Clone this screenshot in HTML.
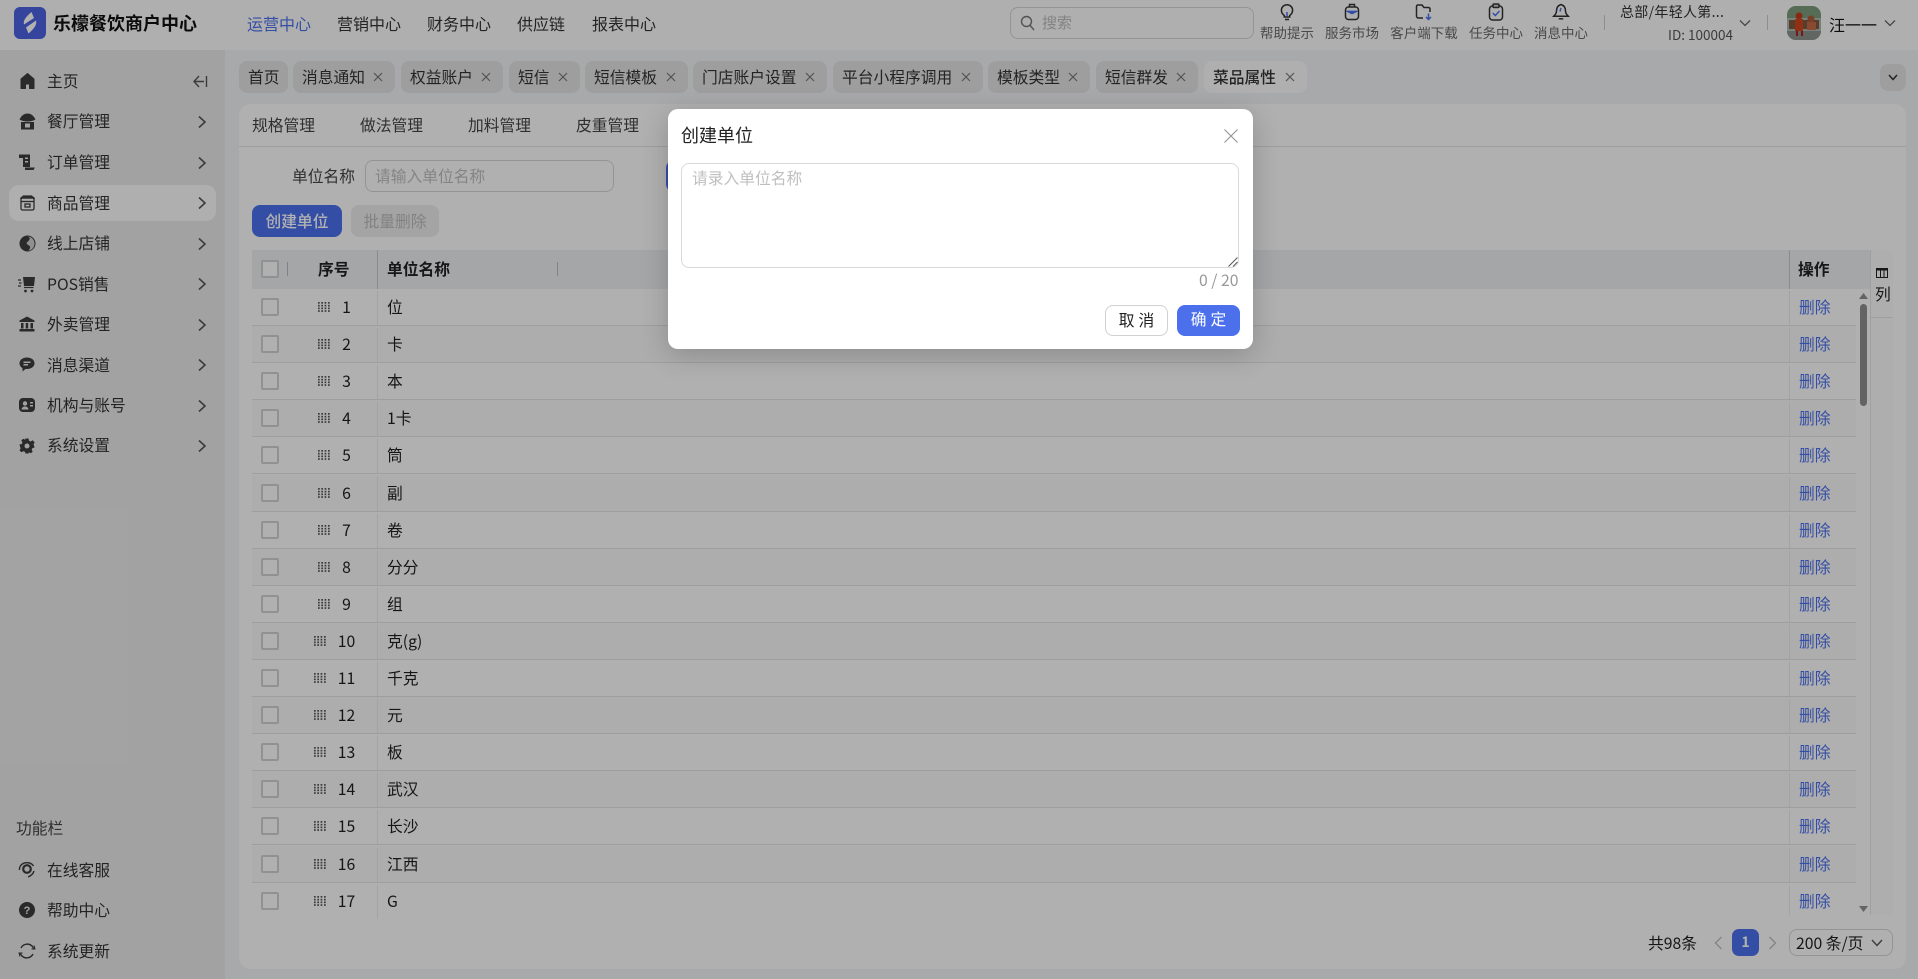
<!DOCTYPE html>
<html lang="zh"><head><meta charset="utf-8"><title>菜品属性</title>
<style>
*{box-sizing:border-box;margin:0;padding:0}
html,body{width:1918px;height:979px;overflow:hidden;background:#f1f3f5}
body{font-family:"Noto Sans CJK SC","Liberation Sans",sans-serif;font-size:15.750px;color:#1f1f1f;position:relative}
.a{position:absolute;white-space:nowrap}
.c{line-height:24px;margin-top:-12px}
#hd{left:0;top:0;width:1918px;height:50px;background:#fbfbfb}
#sb{left:0;top:50px;width:225px;height:929px;background:#e9e9e9}
.nav{color:#333;font-size:16px}
.mi{color:#333;left:47px}
.ch{left:197px;width:10px;height:14px}
.hi{font-size:13.500px;color:#6a6a6a;top:20px;line-height:24px;transform:translateX(-50%)}
.ico{position:absolute}
.tab{position:absolute;top:61px;height:32px;background:#e3e3e3;border-radius:8px;line-height:31px;padding-left:9px;color:#333}
.tab svg{position:absolute;right:12px;top:11px}
#card{left:239px;top:104px;width:1667px;height:865px;background:#fdfdfd;border-radius:12px}
.st{top:113px;line-height:24px;color:#444}
.th{background:#eceef1;position:absolute;left:252px;top:250px;width:1618px;height:39px}
.b{font-weight:700;color:#222}
.r{position:absolute;left:252px;width:1604px;height:37.1px;border-bottom:1px solid #e3e3e3}
.r.e{background:#f8f8f8}
.r .cb{position:absolute;left:9px;top:9px;width:18px;height:18px;border:2px solid #d0d0d0;border-radius:2px;background:#fdfdfd}
.r .dt{position:absolute;top:13px;width:12px;height:10px}
.r .n{position:absolute;left:74.500px;width:40px;text-align:center;line-height:35px}
.r .t{position:absolute;left:135px;line-height:35px}
.r .l1{position:absolute;left:125px;top:2px;height:34px;width:1px;background:#eaeaea}
.r .l2{position:absolute;left:1537px;top:2px;height:34px;width:1px;background:#eaeaea}
.r .op{position:absolute;left:1547px;line-height:35px;color:#4c70ec}
.ov{left:0;top:0;width:1918px;height:979px;background:rgba(0,0,0,.3)}
#m{left:668px;top:109px;width:585px;height:240px;background:#fff;border-radius:10px;box-shadow:0 6px 28px rgba(0,0,0,.2)}
</style></head><body>

<svg width="0" height="0" style="position:absolute"><defs>
<symbol id="dots" viewBox="0 0 12 10"><g fill="#555"><rect x="0" y="0" width="1.700" height="1.700"/><rect x="3.300" y="0" width="1.700" height="1.700"/><rect x="6.600" y="0" width="1.700" height="1.700"/><rect x="10" y="0" width="1.700" height="1.700"/><rect x="0" y="2.800" width="1.700" height="1.700"/><rect x="3.300" y="2.800" width="1.700" height="1.700"/><rect x="6.600" y="2.800" width="1.700" height="1.700"/><rect x="10" y="2.800" width="1.700" height="1.700"/><rect x="0" y="5.500" width="1.700" height="1.700"/><rect x="3.300" y="5.500" width="1.700" height="1.700"/><rect x="6.600" y="5.500" width="1.700" height="1.700"/><rect x="10" y="5.500" width="1.700" height="1.700"/><rect x="0" y="8.200" width="1.700" height="1.700"/><rect x="3.300" y="8.200" width="1.700" height="1.700"/><rect x="6.600" y="8.200" width="1.700" height="1.700"/><rect x="10" y="8.200" width="1.700" height="1.700"/></g></symbol>
<symbol id="chev" viewBox="0 0 10 14"><path d="M2 1.500 8 7 2 12.500" fill="none" stroke="#555" stroke-width="1.600"/></symbol>
<symbol id="x" viewBox="0 0 10 10"><path d="M1 1 9 9M9 1 1 9" stroke="#777" stroke-width="1.200" fill="none"/></symbol>
</defs></svg>

<div class="a" id="hd"></div>
<div class="a" id="sb"></div>

<!-- logo -->
<svg class="a" style="left:14px;top:7px" width="32" height="32" viewBox="0 0 32 32"><rect width="32" height="32" rx="6" fill="#4c62e0"/><path d="M17.500 5 20 11 10 17.500C9 14 11 10.500 17.500 5Z" fill="#fff"/><path d="M22 13.500C23 17 21 21 14.500 26.500L12 20.500Z" fill="#fff"/></svg>
<div class="a c" style="left:53px;top:23px;font-size:18px;font-weight:700;color:#111">乐檬餐饮商户中心</div>
<div class="a c" style="left:247px;top:23px;color:#4c70ec;font-size:16px">运营中心</div>
<div class="a c nav" style="left:337px;top:23px">营销中心</div>
<div class="a c nav" style="left:427px;top:23px">财务中心</div>
<div class="a c nav" style="left:517px;top:23px">供应链</div>
<div class="a c nav" style="left:592px;top:23px">报表中心</div>

<div class="a" style="left:1010px;top:7px;width:244px;height:32px;border:1px solid #d4d4d4;border-radius:8px"></div>
<svg class="a" style="left:1020px;top:15px" width="15" height="16" viewBox="0 0 15 16"><circle cx="6.500" cy="6.500" r="5" fill="none" stroke="#777" stroke-width="1.400"/><path d="M10.200 10.500 14 15" stroke="#777" stroke-width="1.400"/></svg>
<div class="a c" style="left:1042px;top:23px;font-size:15px;color:#bbb">搜索</div>

<!-- top icons -->
<svg class="a" style="left:1279px;top:3px" width="16" height="18" viewBox="0 0 16 18" fill="none" stroke="#333" stroke-width="1.500"><path d="M5.300 12.500C3.500 11.200 2.400 9.500 2.400 7.300A5.600 5.600 0 0 1 13.600 7.300C13.600 9.500 12.500 11.200 10.700 12.500V14H5.300Z"/><path d="M6 16.500H10" stroke="#333"/><path d="M8 9V13" stroke="#4c70ec"/></svg>
<svg class="a" style="left:1344px;top:3px" width="16" height="18" viewBox="0 0 16 18" fill="none" stroke="#333" stroke-width="1.500"><rect x="1.500" y="4" width="13" height="12.500" rx="3"/><path d="M5.500 4V1.500H10.500V4"/><path d="M2 8H14L8 11Z" fill="#4c70ec" stroke="#4c70ec" stroke-width=".8"/></svg>
<svg class="a" style="left:1415px;top:3px" width="18" height="18" viewBox="0 0 18 18" fill="none" stroke="#333" stroke-width="1.500"><path d="M8 15H3.500A2 2 0 0 1 1.500 13V3.500A1.500 1.500 0 0 1 3 2H7L9 4.500H13.500A1.500 1.500 0 0 1 15 6V9"/><path d="M13.500 10.500V16M11 14 13.500 16.500 16 14" stroke="#4c70ec"/></svg>
<svg class="a" style="left:1488px;top:3px" width="16" height="18" viewBox="0 0 16 18" fill="none" stroke="#333" stroke-width="1.500"><rect x="1.500" y="3" width="13" height="14" rx="3"/><rect x="5" y="1" width="6" height="3.500" rx="1" fill="#c8c8c8"/><path d="M4.800 10 7.300 12.500 11.500 8" stroke="#4c70ec"/></svg>
<svg class="a" style="left:1552px;top:3px" width="18" height="18" viewBox="0 0 18 18" fill="none" stroke="#333" stroke-width="1.500"><path d="M9 1.500C5.800 2.500 4.500 5 4.500 8C4.500 10.500 3 12 1.800 13.200H16.200C15 12 13.500 10.500 13.500 8C13.500 5 12.200 2.500 9 1.500Z"/><path d="M6.800 15.800H11.200"/><path d="M9 5 8 8.500" stroke="#4c70ec"/></svg>
<div class="a hi" style="left:1287px">帮助提示</div>
<div class="a hi" style="left:1352px">服务市场</div>
<div class="a hi" style="left:1424px">客户端下载</div>
<div class="a hi" style="left:1496px">任务中心</div>
<div class="a hi" style="left:1561px">消息中心</div>
<div class="a" style="left:1604px;top:15px;width:1px;height:15px;background:#ccc"></div>
<div class="a c" style="left:1620px;top:12px;font-size:14px;color:#333;letter-spacing:.3px">总部/年轻人第...</div>
<div class="a c" style="right:185px;top:34px;font-size:13.500px;color:#555">ID: 100004</div>
<svg class="a" style="left:1739px;top:19px" width="12" height="8" viewBox="0 0 12 8"><path d="M1 1.500 6 6.500 11 1.500" fill="none" stroke="#666" stroke-width="1.300"/></svg>
<div class="a" style="left:1767px;top:15px;width:1px;height:15px;background:#ccc"></div>
<svg class="a" style="left:1787px;top:6px" width="34" height="34" viewBox="0 0 34 34"><defs><clipPath id="av"><rect width="34" height="34" rx="9"/></clipPath></defs><g clip-path="url(#av)"><rect width="34" height="34" fill="#a9b9b0"/><rect width="34" height="12" fill="#7d9b7a"/><rect y="25" width="34" height="9" fill="#8d938e"/><rect x="2" y="14" width="30" height="9" fill="#7a5a40"/><circle cx="12" cy="10" r="3.500" fill="#c43a1c"/><rect x="8" y="13" width="8" height="12" fill="#d2461e"/><rect x="9" y="25" width="2" height="5" fill="#a22"/><rect x="14" y="25" width="2" height="5" fill="#a22"/><circle cx="24" cy="13" r="3.500" fill="#b05a38"/><rect x="20" y="16" width="9" height="8" fill="#c66a48"/></g></svg>
<div class="a c" style="left:1829px;top:24px;color:#111;font-size:16px">汪一一</div>
<svg class="a" style="left:1884px;top:19px" width="12" height="8" viewBox="0 0 12 8"><path d="M1 1.500 6 6.500 11 1.500" fill="none" stroke="#666" stroke-width="1.300"/></svg>

<!-- sidebar -->
<div class="a" style="left:9px;top:185px;width:207px;height:36px;background:#fbfbfb;border-radius:10px"></div>
<svg class="a" style="left:20px;top:73px" width="15" height="16" viewBox="0 0 15 16"><path d="M7.500 .5 14 6V15.500H9.500V11H5.500V15.500H1V6Z" fill="#3d3d3d" stroke="#3d3d3d" stroke-linejoin="round"/></svg>
<svg class="a" style="left:19px;top:113px" width="17" height="17" viewBox="0 0 17 17"><path d="M8.500 .5C12 .5 14.500 2.500 16.500 6.500Q13 8.500 8.500 8.500T.5 6.500C2.500 2.500 5 .5 8.500 .5Z" fill="#3d3d3d"/><path d="M2 9V16.500H15V9Z" fill="#3d3d3d"/><rect x="6" y="10.500" width="5" height="4" fill="#e9e9e9"/></svg>
<svg class="a" style="left:18px;top:153px" width="18" height="18" viewBox="0 0 18 18"><path d="M1 1.500H12V14H5V5H1Z" fill="#3d3d3d"/><rect x="7" y="4.500" width="3" height="1.500" fill="#e9e9e9"/><rect x="7" y="8" width="3" height="1.500" fill="#e9e9e9"/><path d="M7 14.500H17L15.500 17H7Z" fill="#3d3d3d"/></svg>
<svg class="a" style="left:20px;top:195px" width="15" height="16" viewBox="0 0 15 16" fill="none" stroke="#3d3d3d" stroke-width="1.300"><rect x="1" y="3" width="13" height="12" rx="1.500"/><path d="M3.500 1H11.500L14 3H1Z" fill="#3d3d3d"/><path d="M1 6.500H14"/><rect x="5" y="9" width="5" height="3"/></svg>
<svg class="a" style="left:19px;top:235px" width="17" height="17" viewBox="0 0 17 17"><circle cx="8.500" cy="8.500" r="8" fill="#3d3d3d"/><path d="M9 1.500C12 3 10.500 5 9 6.500 6.500 8 8 9.500 10 10.500 12 11.500 11 14 9.500 15.500 13 15.500 15.500 12 15.500 8.500 15.500 5 13 2 9 1.500Z" fill="#cfcfcf"/></svg>
<svg class="a" style="left:18px;top:276px" width="18" height="17" viewBox="0 0 18 17"><path d="M5 1H17L16 10H6Z" fill="#3d3d3d"/><path d="M6 11.500H15.500" stroke="#3d3d3d" stroke-width="1.200"/><circle cx="7.500" cy="15" r="1.400" fill="#3d3d3d"/><circle cx="14" cy="15" r="1.400" fill="#3d3d3d"/><path d="M0 4H3M1 7H3.500M0 10H3" stroke="#3d3d3d" stroke-width="1.300"/></svg>
<svg class="a" style="left:19px;top:316px" width="16" height="16" viewBox="0 0 16 16"><path d="M8 .5 15.500 4.500V6H.5V4.500Z" fill="#3d3d3d"/><rect x="2" y="7" width="2.500" height="5.500" fill="#3d3d3d"/><rect x="6.700" y="7" width="2.500" height="5.500" fill="#3d3d3d"/><rect x="11.500" y="7" width="2.500" height="5.500" fill="#3d3d3d"/><rect x=".5" y="13" width="15" height="2.500" fill="#3d3d3d"/></svg>
<svg class="a" style="left:19px;top:357px" width="16" height="15" viewBox="0 0 16 15"><path d="M8 .5C12.400 .5 15.500 3 15.500 6.300 15.500 9.600 12.400 12 8 12H6.500L3.500 14.500V11.200C1.500 10 .5 8.300 .5 6.300 .5 3 3.600 .5 8 .5Z" fill="#3d3d3d"/><rect x="4.500" y="4.500" width="7" height="1.500" fill="#e9e9e9"/><rect x="4.500" y="7" width="4.500" height="1.500" fill="#e9e9e9"/></svg>
<svg class="a" style="left:19px;top:398px" width="16" height="14" viewBox="0 0 16 14"><rect width="16" height="14" rx="4" fill="#3d3d3d"/><circle cx="6" cy="5.500" r="2.200" fill="#e9e9e9"/><path d="M2.500 11.500C3 9 4.500 8.500 6 8.500S9 9 9.500 11.500Z" fill="#e9e9e9"/><rect x="11" y="4" width="3" height="1.500" fill="#e9e9e9"/><rect x="11" y="7" width="3" height="1.500" fill="#e9e9e9"/></svg>
<svg class="a" style="left:19px;top:438px" width="16" height="16" viewBox="0 0 16 16"><path d="M6.500 .5H9.500L10 2.800 11.700 3.500 13.700 2.300 15.700 4.400 14.500 6.300 15.200 8 15.500 9.500 13.300 10.200 12.700 11.800 13.700 13.800 11.700 15.300 10 14.300 9.500 15.500H6.500L6 13.800 4.300 13.200 2.300 14.300 .5 12.200 1.700 10.300 1 8.800 .5 6.500 2.800 6 3.400 4.300 2.300 2.300 4.400 .7 6 1.800Z" fill="#3d3d3d"/><circle cx="8" cy="8" r="2.500" fill="#e9e9e9"/></svg>

<div class="a c mi" style="top:81px">主页</div>
<div class="a c mi" style="top:121px">餐厅管理</div>
<div class="a c mi" style="top:162px">订单管理</div>
<div class="a c mi" style="top:203px">商品管理</div>
<div class="a c mi" style="top:243px">线上店铺</div>
<div class="a c mi" style="top:284px">POS销售</div>
<div class="a c mi" style="top:324px">外卖管理</div>
<div class="a c mi" style="top:365px">消息渠道</div>
<div class="a c mi" style="top:405px">机构与账号</div>
<div class="a c mi" style="top:445px">系统设置</div>
<svg class="a" style="left:193px;top:75px" width="15" height="13" viewBox="0 0 15 13" fill="none" stroke="#555" stroke-width="1.400"><path d="M6 1 1 6.500 6 12M1.500 6.500H11M13.500 1V12"/></svg>
<svg class="a ch" style="top:115px"><use href="#chev"/></svg>
<svg class="a ch" style="top:156px"><use href="#chev"/></svg>
<svg class="a ch" style="top:196px"><use href="#chev"/></svg>
<svg class="a ch" style="top:237px"><use href="#chev"/></svg>
<svg class="a ch" style="top:277px"><use href="#chev"/></svg>
<svg class="a ch" style="top:318px"><use href="#chev"/></svg>
<svg class="a ch" style="top:358px"><use href="#chev"/></svg>
<svg class="a ch" style="top:399px"><use href="#chev"/></svg>
<svg class="a ch" style="top:439px"><use href="#chev"/></svg>

<div class="a c" style="left:16px;top:828px;color:#444">功能栏</div>
<svg class="a" style="left:18px;top:862px" width="18" height="16" viewBox="0 0 18 16" fill="none" stroke="#3d3d3d"><circle cx="9" cy="7" r="3.800" stroke-width="2.200"/><path d="M1.500 8A7.500 6.500 0 0 1 15.500 4M16 9C15 12.500 12.500 14 10 15" stroke-width="1.400"/></svg>
<svg class="a" style="left:19px;top:902px" width="16" height="16" viewBox="0 0 16 16"><circle cx="8" cy="8" r="8" fill="#3d3d3d"/><text x="8" y="12" text-anchor="middle" font-family="Liberation Sans" font-size="11" font-weight="700" fill="#e9e9e9">?</text></svg>
<svg class="a" style="left:18px;top:942px" width="18" height="18" viewBox="0 0 18 18" fill="none" stroke="#3d3d3d" stroke-width="1.400"><path d="M3 6A7 7 0 0 1 14.500 4.500L16 7"/><path d="M15 12A7 7 0 0 1 3.500 13.500L2 11"/><path d="M13.500 7H17L16 3.500M4.500 11H1L2 14.500" stroke-width="1"/></svg>
<div class="a c mi" style="top:870px">在线客服</div>
<div class="a c mi" style="top:910px">帮助中心</div>
<div class="a c mi" style="top:951px">系统更新</div>

<!-- tabs -->
<div class="tab" style="left:239px;width:49px">首页</div>
<div class="tab" style="left:293px;width:102px">消息通知<svg width="10" height="10"><use href="#x"/></svg></div>
<div class="tab" style="left:401px;width:102px">权益账户<svg width="10" height="10"><use href="#x"/></svg></div>
<div class="tab" style="left:509px;width:71px">短信<svg width="10" height="10"><use href="#x"/></svg></div>
<div class="tab" style="left:585px;width:103px">短信模板<svg width="10" height="10"><use href="#x"/></svg></div>
<div class="tab" style="left:693px;width:134px">门店账户设置<svg width="10" height="10"><use href="#x"/></svg></div>
<div class="tab" style="left:833px;width:150px">平台小程序调用<svg width="10" height="10"><use href="#x"/></svg></div>
<div class="tab" style="left:988px;width:102px">模板类型<svg width="10" height="10"><use href="#x"/></svg></div>
<div class="tab" style="left:1096px;width:102px">短信群发<svg width="10" height="10"><use href="#x"/></svg></div>
<div class="tab" style="left:1204px;width:103px;background:#fbfbfb;font-weight:500">菜品属性<svg width="10" height="10"><use href="#x"/></svg></div>
<div class="a" style="left:1880px;top:64px;width:26px;height:27px;background:#e3e3e3;border-radius:8px"></div>
<svg class="a" style="left:1888px;top:74px" width="10" height="7" viewBox="0 0 10 7"><path d="M1 1 5 5.500 9 1" fill="none" stroke="#333" stroke-width="1.500"/></svg>

<!-- card -->
<div class="a" id="card"></div>
<div class="a st" style="left:252px">规格管理</div>
<div class="a st" style="left:360px">做法管理</div>
<div class="a st" style="left:468px">加料管理</div>
<div class="a st" style="left:576px">皮重管理</div>
<div class="a" style="left:239px;top:146px;width:1667px;height:1px;background:#e3e3e3"></div>
<div class="a c" style="left:292px;top:176px;color:#444">单位名称</div>
<div class="a" style="left:365px;top:160px;width:249px;height:32px;border:1px solid #d4d4d4;border-radius:8px"></div>
<div class="a c" style="left:375px;top:175.500px;color:#bdbdbd">请输入单位名称</div>
<div class="a" style="left:666px;top:160px;width:40px;height:32px;background:#4c70ec;border-radius:8px"></div>
<div class="a" style="left:252px;top:205px;width:90px;height:32px;background:#4c70ec;border-radius:8px;color:#fff;text-align:center;line-height:31px;font-weight:500">创建单位</div>
<div class="a" style="left:351px;top:205px;width:88px;height:32px;background:#ebebeb;border-radius:8px;color:#bbb;text-align:center;line-height:31px">批量删除</div>

<!-- table -->
<div class="th"></div>
<div class="a" style="left:261px;top:260px;width:18px;height:18px;border:2px solid #d0d0d0;border-radius:2px;background:#fdfdfd"></div>
<div class="a" style="left:287px;top:262px;width:1px;height:14px;background:#bbb"></div>
<div class="a c b" style="left:318px;top:268.500px">序号</div>
<div class="a" style="left:377px;top:250px;width:1px;height:39px;background:#c8c8c8"></div>
<div class="a c b" style="left:387px;top:268.500px">单位名称</div>
<div class="a" style="left:557px;top:262px;width:1px;height:14px;background:#bbb"></div>
<div class="a" style="left:1789px;top:250px;width:1px;height:39px;background:#c8c8c8"></div>
<div class="a c b" style="left:1798px;top:268.500px">操作</div>
<div class="r" style="top:289px"><i class="cb"></i><svg class="dt" style="left:66px"><use href="#dots"/></svg><span class="n">1</span><i class="l1"></i><span class="t">位</span><i class="l2"></i><span class="op">删除</span></div>
<div class="r e" style="top:326px"><i class="cb"></i><svg class="dt" style="left:66px"><use href="#dots"/></svg><span class="n">2</span><i class="l1"></i><span class="t">卡</span><i class="l2"></i><span class="op">删除</span></div>
<div class="r" style="top:363px"><i class="cb"></i><svg class="dt" style="left:66px"><use href="#dots"/></svg><span class="n">3</span><i class="l1"></i><span class="t">本</span><i class="l2"></i><span class="op">删除</span></div>
<div class="r e" style="top:400px"><i class="cb"></i><svg class="dt" style="left:66px"><use href="#dots"/></svg><span class="n">4</span><i class="l1"></i><span class="t">1卡</span><i class="l2"></i><span class="op">删除</span></div>
<div class="r" style="top:437.400px"><i class="cb"></i><svg class="dt" style="left:66px"><use href="#dots"/></svg><span class="n">5</span><i class="l1"></i><span class="t">筒</span><i class="l2"></i><span class="op">删除</span></div>
<div class="r e" style="top:474.500px"><i class="cb"></i><svg class="dt" style="left:66px"><use href="#dots"/></svg><span class="n">6</span><i class="l1"></i><span class="t">副</span><i class="l2"></i><span class="op">删除</span></div>
<div class="r" style="top:511.600px"><i class="cb"></i><svg class="dt" style="left:66px"><use href="#dots"/></svg><span class="n">7</span><i class="l1"></i><span class="t">卷</span><i class="l2"></i><span class="op">删除</span></div>
<div class="r e" style="top:548.700px"><i class="cb"></i><svg class="dt" style="left:66px"><use href="#dots"/></svg><span class="n">8</span><i class="l1"></i><span class="t">分分</span><i class="l2"></i><span class="op">删除</span></div>
<div class="r" style="top:585.800px"><i class="cb"></i><svg class="dt" style="left:66px"><use href="#dots"/></svg><span class="n">9</span><i class="l1"></i><span class="t">组</span><i class="l2"></i><span class="op">删除</span></div>
<div class="r e" style="top:622.900px"><i class="cb"></i><svg class="dt" style="left:62px"><use href="#dots"/></svg><span class="n">10</span><i class="l1"></i><span class="t">克(g)</span><i class="l2"></i><span class="op">删除</span></div>
<div class="r" style="top:660px"><i class="cb"></i><svg class="dt" style="left:62px"><use href="#dots"/></svg><span class="n">11</span><i class="l1"></i><span class="t">千克</span><i class="l2"></i><span class="op">删除</span></div>
<div class="r e" style="top:697px"><i class="cb"></i><svg class="dt" style="left:62px"><use href="#dots"/></svg><span class="n">12</span><i class="l1"></i><span class="t">元</span><i class="l2"></i><span class="op">删除</span></div>
<div class="r" style="top:734.200px"><i class="cb"></i><svg class="dt" style="left:62px"><use href="#dots"/></svg><span class="n">13</span><i class="l1"></i><span class="t">板</span><i class="l2"></i><span class="op">删除</span></div>
<div class="r e" style="top:771.300px"><i class="cb"></i><svg class="dt" style="left:62px"><use href="#dots"/></svg><span class="n">14</span><i class="l1"></i><span class="t">武汉</span><i class="l2"></i><span class="op">删除</span></div>
<div class="r" style="top:808.400px"><i class="cb"></i><svg class="dt" style="left:62px"><use href="#dots"/></svg><span class="n">15</span><i class="l1"></i><span class="t">长沙</span><i class="l2"></i><span class="op">删除</span></div>
<div class="r e" style="top:845.500px"><i class="cb"></i><svg class="dt" style="left:62px"><use href="#dots"/></svg><span class="n">16</span><i class="l1"></i><span class="t">江西</span><i class="l2"></i><span class="op">删除</span></div>
<div class="r" style="top:882.600px;border-bottom:0"><i class="cb"></i><svg class="dt" style="left:62px"><use href="#dots"/></svg><span class="n">17</span><i class="l1"></i><span class="t">G</span><i class="l2" style="height:30px"></i><span class="op">删除</span></div>

<!-- scrollbar + column -->
<div class="a" style="left:1860px;top:304px;width:7px;height:102px;background:#8f8f8f;border-radius:4px"></div>
<svg class="a" style="left:1859px;top:293px" width="9" height="6"><path d="M4.500 0 9 6H0Z" fill="#8f8f8f"/></svg>
<svg class="a" style="left:1859px;top:906px" width="9" height="6"><path d="M0 0H9L4.500 6Z" fill="#8f8f8f"/></svg>
<div class="a" style="left:1870px;top:250px;width:23px;height:665px;background:#fafafa;border-left:1px solid #e6e6e6"></div>
<div class="a" style="left:1871px;top:317px;width:22px;height:1px;background:#e3e3e3"></div>
<svg class="a" style="left:1876px;top:268px" width="12" height="10" viewBox="0 0 12 10"><rect x=".5" y=".5" width="11" height="9" fill="none" stroke="#222"/><rect x="0" y="0" width="12" height="2.500" fill="#222"/><path d="M4.500 1V10M8 1V10" stroke="#222"/></svg>
<div class="a c" style="left:1875px;top:294px;color:#222">列</div>

<!-- pagination -->
<div class="a c" style="left:1648px;top:943px;color:#222">共98条</div>
<svg class="a" style="left:1714px;top:936px" width="9" height="14" viewBox="0 0 9 14"><path d="M7.500 1 1.500 7 7.500 13" fill="none" stroke="#bbb" stroke-width="1.300"/></svg>
<div class="a" style="left:1732px;top:929px;width:27px;height:27px;background:#4c70ec;border-radius:7px;color:#fff;text-align:center;line-height:27px;font-size:14px;font-weight:700">1</div>
<svg class="a" style="left:1768px;top:936px" width="9" height="14" viewBox="0 0 9 14"><path d="M1.500 1 7.500 7 1.500 13" fill="none" stroke="#bbb" stroke-width="1.300"/></svg>
<div class="a" style="left:1789px;top:929px;width:104px;height:27px;border:1px solid #d4d4d4;border-radius:8px"></div>
<div class="a c" style="left:1796px;top:943px;color:#222">200 条/页</div>
<svg class="a" style="left:1871px;top:939px" width="12" height="8" viewBox="0 0 12 8"><path d="M1 1 6 6.500 11 1" fill="none" stroke="#555" stroke-width="1.400"/></svg>

<div class="a ov"></div>

<!-- modal -->
<div class="a" id="m"></div>
<div class="a c" style="left:681px;top:135px;font-size:18px;color:#222;z-index:2">创建单位</div>
<svg class="a" style="left:1224px;top:129px;z-index:2" width="14" height="14" viewBox="0 0 14 14"><path d="M.5 .5 13.500 13.500M13.500 .5 .5 13.500" stroke="#999" stroke-width="1.200"/></svg>
<div class="a" style="left:681px;top:163px;width:558px;height:105px;border:1px solid #d9d9d9;border-radius:8px;z-index:2"></div>
<div class="a c" style="left:692px;top:178px;color:#bfbfbf;z-index:2">请录入单位名称</div>
<svg class="a" style="left:1228px;top:257px;z-index:2" width="10" height="10" viewBox="0 0 10 10"><path d="M9.500 .5 .5 9.500M9.500 5 5 9.500" stroke="#555" stroke-width="1"/></svg>
<div class="a c" style="left:1199px;top:280px;color:#999;z-index:2">0 / 20</div>
<div class="a" style="left:1105px;top:305px;width:63px;height:31px;border:1px solid #d0d0d0;border-radius:8px;text-align:center;line-height:27px;color:#222;letter-spacing:4px;text-indent:4px;z-index:2;background:#fff">取消</div>
<div class="a" style="left:1177px;top:305px;width:63px;height:31px;background:#4c70ec;border-radius:8px;text-align:center;line-height:28px;color:#fff;letter-spacing:4px;text-indent:4px;z-index:2">确定</div>

</body></html>
